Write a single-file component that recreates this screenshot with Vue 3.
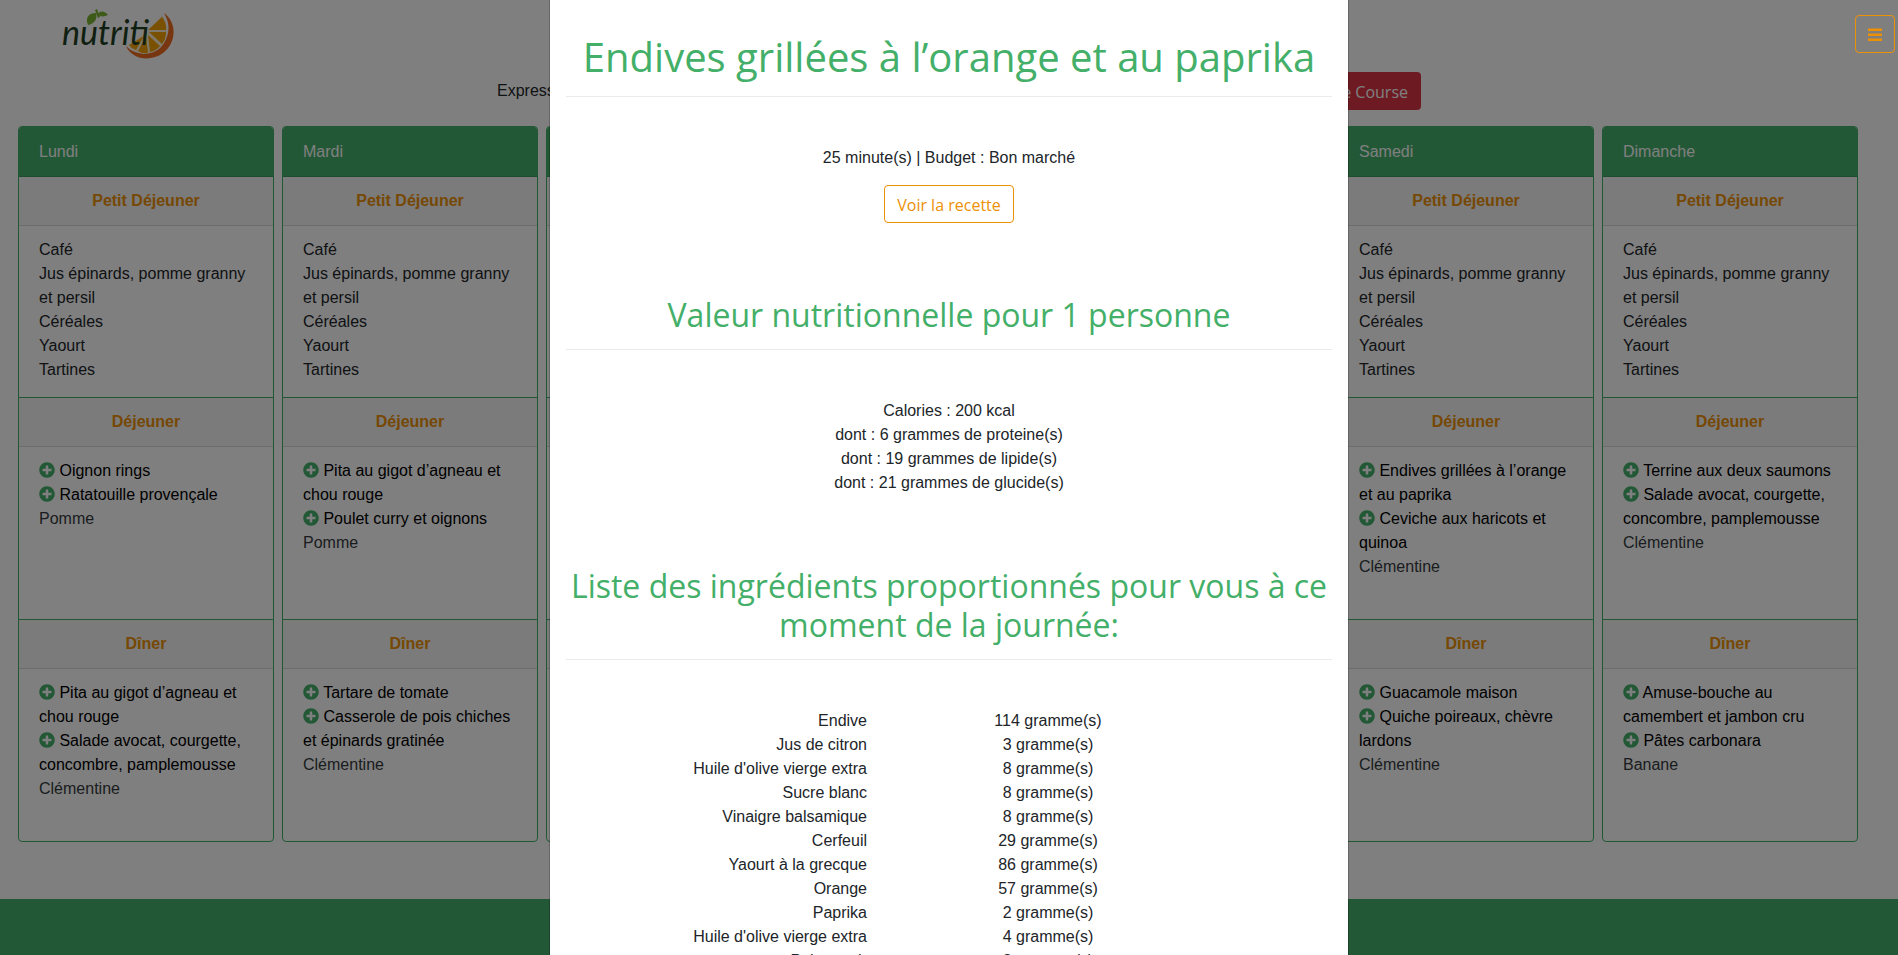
<script setup>
const breakfast = ['Café', 'Jus épinards, pomme granny et persil', 'Céréales', 'Yaourt', 'Tartines']

const days = [
  {
    name: 'Lundi',
    breakfast,
    lunch: ['Oignon rings', 'Ratatouille provençale'],
    lunchFruit: 'Pomme',
    dinner: ['Pita au gigot d’agneau et chou rouge', 'Salade avocat, courgette, concombre, pamplemousse'],
    dinnerFruit: 'Clémentine',
  },
  {
    name: 'Mardi',
    breakfast,
    lunch: ['Pita au gigot d’agneau et chou rouge', 'Poulet curry et oignons'],
    lunchFruit: 'Pomme',
    dinner: ['Tartare de tomate', 'Casserole de pois chiches et épinards gratinée'],
    dinnerFruit: 'Clémentine',
  },
  { name: 'Mercredi' },
  { name: 'Jeudi' },
  { name: 'Vendredi' },
  {
    name: 'Samedi',
    breakfast,
    lunch: ['Endives grillées à l’orange et au paprika', 'Ceviche aux haricots et quinoa'],
    lunchFruit: 'Clémentine',
    dinner: ['Guacamole maison', 'Quiche poireaux, chèvre lardons'],
    dinnerFruit: 'Clémentine',
  },
  {
    name: 'Dimanche',
    breakfast,
    lunch: ['Terrine aux deux saumons', 'Salade avocat, courgette, concombre, pamplemousse'],
    lunchFruit: 'Clémentine',
    dinner: ['Amuse-bouche au camembert et jambon cru', 'Pâtes carbonara'],
    dinnerFruit: 'Banane',
  },
]

const nutrition = [
  'Calories : 200 kcal',
  'dont : 6 grammes de proteine(s)',
  'dont : 19 grammes de lipide(s)',
  'dont : 21 grammes de glucide(s)',
]

const ingredients = [
  ['Endive', 114],
  ['Jus de citron', 3],
  ["Huile d'olive vierge extra", 8],
  ['Sucre blanc', 8],
  ['Vinaigre balsamique', 8],
  ['Cerfeuil', 29],
  ['Yaourt à la grecque', 86],
  ['Orange', 57],
  ['Paprika', 2],
  ["Huile d'olive vierge extra", 4],
  ['Poivre noir', 2],
]

const meals = (day) => [
  { title: 'Déjeuner', dishes: day.lunch, fruit: day.lunchFruit },
  { title: 'Dîner', dishes: day.dinner, fruit: day.dinnerFruit },
]
</script>

<template>
  <div class="page">
    <header class="topbar">
      <a href="#" class="logo" aria-label="nutriti">
        <svg viewBox="0 0 120 56" width="120" height="56">
          <path d="M84 13 C97 22 97 43 83 53 C71 62 52 60 46 46 C58 58 76 55 84 43 C90 33 90 23 84 13 Z" fill="#ee6c1e" />
          <path d="M82 15 C90 28 88 41 79 49 C69 57 54 54 48 45 L68 31 Z" fill="#fff2d8" />
          <path d="M68 30 L82 17 Q87 23 86 30 Z M69 32 L86 32 Q86 39 82 44 Z M68 35 L80 46 Q76 51 70 52 Z M66 36 L68 53 Q62 54 58 51 Z M64 36 L56 50 Q51 48 49 45 Z" fill="#f4a304" />
          <path d="M8 25 C5 17 9 13 16 13 C18 19 14 24 8 25 Z M18 14 C20 10 25 11 28 15 C24 17 20 17 18 14 Z M15 10 L17 9 L20 17 L18 18 Z" fill="#7bb531" />
          <text x="-18" y="45" class="logo-word">nutriti</text>
        </svg>
      </a>
    </header>

    <div class="actions">
      <span>Express</span>
      <button type="button" class="btn btn-danger">Liste de Course</button>
    </div>

    <main class="week">
      <article v-for="day in days" :key="day.name" class="card">
        <h4 class="day">{{ day.name }}</h4>
        <section class="meal">
          <h5 class="meal-title">Petit Déjeuner</h5>
          <ul class="meal-body meal-body-first">
            <li v-for="item in day.breakfast" :key="item">{{ item }}</li>
          </ul>
        </section>
        <section v-for="meal in meals(day)" :key="meal.title" class="meal">
          <h5 class="meal-title">{{ meal.title }}</h5>
          <ul class="meal-body">
            <li v-for="dish in meal.dishes" :key="dish">
              <a href="#" class="dish"><svg class="plus" viewBox="0 0 512 512" aria-hidden="true"><path fill="currentColor" d="M256 8C119 8 8 119 8 256s111 248 248 248 248-111 248-248S393 8 256 8zm144 276c0 6.600-5.400 12-12 12h-92v92c0 6.600-5.400 12-12 12h-56c-6.600 0-12-5.400-12-12v-92h-92c-6.600 0-12-5.400-12-12v-56c0-6.600 5.400-12 12-12h92v-92c0-6.600 5.400-12 12-12h56c6.600 0 12 5.400 12 12v92h92c6.600 0 12 5.400 12 12v56z" /></svg> {{ dish }}</a>
            </li>
            <li v-if="meal.fruit" class="fruit">{{ meal.fruit }}</li>
          </ul>
        </section>
      </article>
    </main>

    <footer class="footer"></footer>
  </div>

  <div class="backdrop"></div>

  <div class="modal-layer">
    <div class="modal" role="dialog" aria-modal="true" aria-labelledby="recipe-title">
      <h1 id="recipe-title">Endives grillées à l’orange et au paprika</h1>
      <div class="summary">
        <p>25 minute(s) | Budget : Bon marché</p>
        <button type="button" class="btn btn-outline">Voir la recette</button>
      </div>
      <h2>Valeur nutritionnelle pour 1 personne</h2>
      <ul class="nutrition">
        <li v-for="line in nutrition" :key="line">{{ line }}</li>
      </ul>
      <h2>Liste des ingrédients proportionnés pour vous à ce moment de la journée:</h2>
      <div class="ingredients-wrap">
        <table class="ingredients">
          <colgroup>
            <col span="2" />
            <col class="col-narrow" />
          </colgroup>
          <tbody>
            <tr v-for="([name, grams], i) in ingredients" :key="i">
              <th scope="row">{{ name }}</th>
              <td>{{ grams }} gramme(s)</td>
              <td></td>
            </tr>
          </tbody>
        </table>
      </div>
    </div>
  </div>

  <button type="button" class="btn btn-outline menu" aria-label="Menu">
    <svg viewBox="0 0 14 16" width="14" height="16" aria-hidden="true">
      <path fill="currentColor" d="M0 1.600h14v2.500H0zM0 6.600h14v2.500H0zM0 11.600h14v2.500H0z" />
    </svg>
  </button>
</template>

<style>
html,
body {
  height: 100%;
  overflow: hidden;
}
</style>

<style scoped>
.page,
.modal-layer,
.menu {
  box-sizing: border-box;
  font-family: "Liberation Sans", Arial, sans-serif;
  font-size: 16px;
  line-height: 24px;
  color: #212529;
}

.page *,
.modal-layer * {
  box-sizing: border-box;
}

.page {
  display: flex;
  flex-direction: column;
  height: 100vh;
  overflow: hidden;
  background: #fff;
}

.topbar {
  flex: none;
  height: 72px;
  padding-left: 80px;
}

.logo {
  display: block;
  width: 120px;
}

.logo svg {
  display: block;
  overflow: visible;
}

.logo-word {
  font-family: Lato, sans-serif;
  font-style: italic;
  font-size: 34px;
  fill: #1f4023;
}

.actions {
  display: flex;
  flex: none;
  align-items: center;
  justify-content: space-between;
  width: 100%;
  max-width: 944px;
  margin: 0 auto;
  padding-left: 20px;
  white-space: nowrap;
}

.actions {
  transform: none;
}

.btn {
  box-sizing: border-box;
  height: 38px;
  padding: 7px 12px 5px;
  border: 1px solid transparent;
  border-radius: 4px;
  font-family: "Open Sans", sans-serif;
  font-size: 16px;
  line-height: 24px;
  cursor: pointer;
}

.btn-danger {
  background: #dc3545;
  color: #fff;
}

.btn-outline {
  border-color: #ec9006;
  background: transparent;
  color: #ec9006;
}

.week {
  display: grid;
  flex: none;
  grid-template-columns: repeat(7, minmax(0, 1fr));
  gap: 8px;
  padding: 16px 40px 57px 18px;
}

.card {
  overflow: hidden;
  border: 1px solid #41b06a;
  border-radius: 4px;
}

.day {
  margin: 0;
  padding: 13px 20px 12px;
  border-bottom: 1px solid rgba(0, 0, 0, 0.125);
  background: #45b06c;
  color: #fff;
  font-size: 16px;
  font-weight: 400;
}

.meal + .meal {
  border-top: 1px solid #41b06a;
}

.meal-title {
  margin: 0;
  padding: 12px 20px;
  border-bottom: 1px solid rgba(0, 0, 0, 0.125);
  background: rgba(0, 0, 0, 0.03);
  color: #ec9006;
  font-size: 16px;
  font-weight: 700;
  text-align: center;
}

.meal-body {
  min-height: 172px;
  margin: 0;
  padding: 12px 20px;
  list-style: none;
}

.meal-body-first {
  min-height: 171px;
}

.dish {
  color: #000;
  text-decoration: none;
}

.plus {
  width: 16px;
  height: 16px;
  color: #45b06c;
  vertical-align: -2px;
}

.fruit {
  color: #343a40;
}

.footer {
  flex: 1 0 56px;
  background: #45b06c;
}

.backdrop {
  position: fixed;
  inset: 0;
  background: rgba(0, 0, 0, 0.5);
}

.modal-layer {
  position: fixed;
  inset: 0;
  overflow: hidden;
}

.modal {
  width: 100%;
  max-width: 800px;
  min-height: 100%;
  margin: 0 auto;
  padding: 33px 16px 16px;
  border: solid rgba(0, 0, 0, 0.2);
  border-width: 0 1px;
  background: #fff;
  background-clip: padding-box;
  text-align: center;
}

h1,
h2 {
  margin: 0;
  padding-bottom: 15px;
  border-bottom: 1px solid #e9ecef;
  color: #43af69;
  font-family: "Open Sans", sans-serif;
  font-weight: 400;
}

h1 {
  font-size: 40px;
  line-height: 48px;
}

h2 {
  font-size: 32px;
  line-height: 39px;
}

.summary {
  padding: 49px 0 72px;
}

.summary p {
  margin: 0 0 15px;
}

.nutrition {
  margin: 0;
  padding: 49px 0 71px;
  list-style: none;
}

.ingredients-wrap {
  margin: 49px -16px 0;
}

.ingredients {
  width: 100%;
  border-collapse: collapse;
  table-layout: fixed;
}

.col-narrow {
  width: 134px;
}

.ingredients th {
  padding: 0 15px 0 0;
  font-weight: 400;
  text-align: right;
}

.ingredients td {
  padding: 0;
}

.menu {
  position: fixed;
  top: 15px;
  right: 3px;
  display: flex;
  align-items: center;
  justify-content: center;
  width: 40px;
}
</style>
